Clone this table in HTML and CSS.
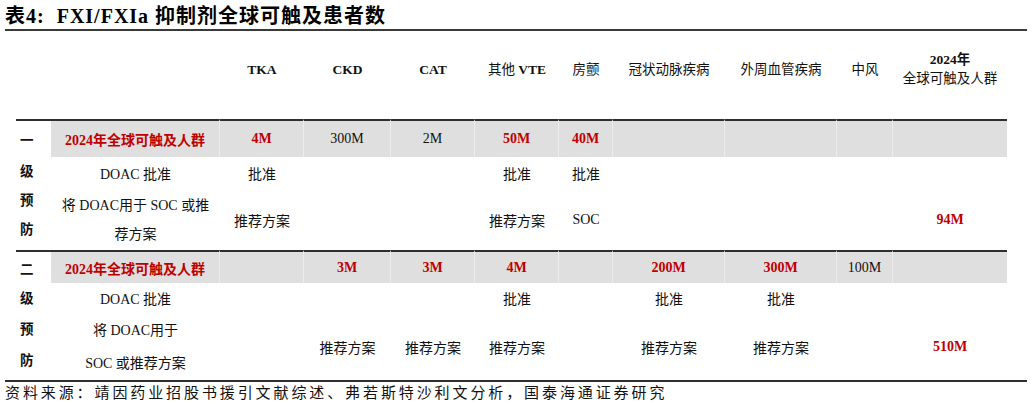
FILE: index.html
```html
<!DOCTYPE html>
<html lang="zh-CN">
<head>
<meta charset="utf-8">
<title>表4: FXI/FXIa 抑制剂全球可触及患者数</title>
<link rel="stylesheet" href="styles.css">
</head>
<body>
<div class="page">
  <h1 class="title"><span class="tag">表4:</span>FXI/FXIa 抑制剂全球可触及患者数</h1>
  <table class="tbl">
    <colgroup>
      <col class="c1"><col class="c2"><col class="c3"><col class="c4"><col class="c5"><col class="c6"><col class="c7"><col class="c8"><col class="c9"><col class="c10"><col class="c11">
    </colgroup>
    <thead>
      <tr class="head">
        <th></th>
        <th></th>
        <th>TKA</th>
        <th>CKD</th>
        <th>CAT</th>
        <th><span class="n">其他</span> VTE</th>
        <th class="n">房颤</th>
        <th class="n">冠状动脉疾病</th>
        <th class="n">外周血管疾病</th>
        <th class="n">中风</th>
        <th class="two">2024年<br><span class="n">全球可触及人群</span></th>
      </tr>
    </thead>
    <tbody>
      <tr class="band s1">
        <td class="side">一</td>
        <td class="red">2024年全球可触及人群</td>
        <td class="red">4M</td>
        <td>300M</td>
        <td>2M</td>
        <td class="red">50M</td>
        <td class="red">40M</td>
        <td></td><td></td><td></td><td></td>
      </tr>
      <tr class="r1 s1">
        <td class="side v1" rowspan="2">级<br>预<br>防</td>
        <td>DOAC 批准</td>
        <td>批准</td>
        <td></td><td></td>
        <td>批准</td>
        <td>批准</td>
        <td></td><td></td><td></td><td></td>
      </tr>
      <tr class="r2 s1">
        <td class="lh29">将 DOAC用于 SOC 或推<br>荐方案</td>
        <td>推荐方案</td>
        <td></td><td></td>
        <td>推荐方案</td>
        <td>SOC</td>
        <td></td><td></td><td></td>
        <td class="red">94M</td>
      </tr>
    </tbody>
    <tbody>
      <tr class="band s2">
        <td class="side">二</td>
        <td class="red">2024年全球可触及人群</td>
        <td></td>
        <td class="red">3M</td>
        <td class="red">3M</td>
        <td class="red">4M</td>
        <td></td>
        <td class="red">200M</td>
        <td class="red">300M</td>
        <td>100M</td>
        <td></td>
      </tr>
      <tr class="r1 s2">
        <td class="side v2" rowspan="2">级<br>预<br>防</td>
        <td>DOAC 批准</td>
        <td></td><td></td><td></td>
        <td>批准</td>
        <td></td>
        <td>批准</td>
        <td>批准</td>
        <td></td><td></td>
      </tr>
      <tr class="r2 s2">
        <td class="lh33">将 DOAC用于<br>SOC 或推荐方案</td>
        <td></td>
        <td>推荐方案</td>
        <td>推荐方案</td>
        <td>推荐方案</td>
        <td></td>
        <td>推荐方案</td>
        <td>推荐方案</td>
        <td></td>
        <td class="red">510M</td>
      </tr>
    </tbody>
  </table>
  <p class="source">资料来源：靖因药业招股书援引文献综述、弗若斯特沙利文分析，国泰海通证券研究</p>
</div>
</body>
</html>
```

FILE: styles.css
```css
html, body {
  margin: 0;
  padding: 0;
  background: #ffffff;
}

body {
  font-family: "Liberation Serif", "Noto Sans CJK SC", serif;
  color: #111111;
}

.page {
  width: 1022px;
  padding-left: 5px;
}

.title {
  margin: 0;
  padding-top: 3px;
  height: 26px;
  line-height: 26px;
  font-size: 20px;
  font-weight: 700;
  letter-spacing: 1px;
  border-bottom: 2px solid #3a3a3a;
  color: #000000;
  white-space: nowrap;
}

.tag {
  margin-right: 12px;
}

.tbl {
  margin-left: 11px;
  width: 991px;
  table-layout: fixed;
  border-collapse: separate;
  border-spacing: 0;
  font-size: 14px;
  letter-spacing: 0;
}

.c1 { width: 35px; }
.c2 { width: 169px; }
.c3 { width: 84px; }
.c4 { width: 87px; }
.c5 { width: 84px; }
.c6 { width: 84px; }
.c7 { width: 54px; }
.c8 { width: 112px; }
.c9 { width: 112px; }
.c10 { width: 56px; }
.c11 { width: 114px; }

.tbl th,
.tbl td {
  padding: 0;
  text-align: center;
  vertical-align: middle;
  white-space: nowrap;
  overflow: visible;
}

.head {
  height: 88px;
}

.head th {
  font-weight: 700;
  font-size: 13.5px;
  padding-bottom: 12px;
  line-height: 19px;
}

.head .n,
.head th.n {
  font-weight: 400;
}

.band td {
  background: #dfdfdf;
  border-top: 2px solid #2e2e2e;
  border-right: 1px solid #ececec;
}

.band td:last-child {
  border-right: none;
}

.band td.side {
  background: #ffffff;
  border-right: none;
}

.band.s1 { height: 38px; }
.r1.s1 { height: 32px; }
.r2.s1 { height: 61px; }

.band.s2 { height: 33px; }
.r1.s2 { height: 30px; }
.r2.s2 { height: 66px; }

.tbl td.side {
  font-weight: 700;
  font-size: 13.5px;
  text-align: left;
  padding-left: 4px;
}

.tbl td.v1 {
  line-height: 29px;
  padding-bottom: 6px;
}

.tbl td.v2 {
  line-height: 31px;
  padding-bottom: 4px;
}

.lh29 { line-height: 29px; }
.lh33 { line-height: 33px; }

.red {
  color: #c00000;
  font-weight: 700;
}

.source {
  margin: 0;
  border-top: 2px solid #2e2e2e;
  height: 22px;
  line-height: 22px;
  font-size: 15px;
  letter-spacing: 2.9px;
  color: #111111;
  white-space: nowrap;
}
```
